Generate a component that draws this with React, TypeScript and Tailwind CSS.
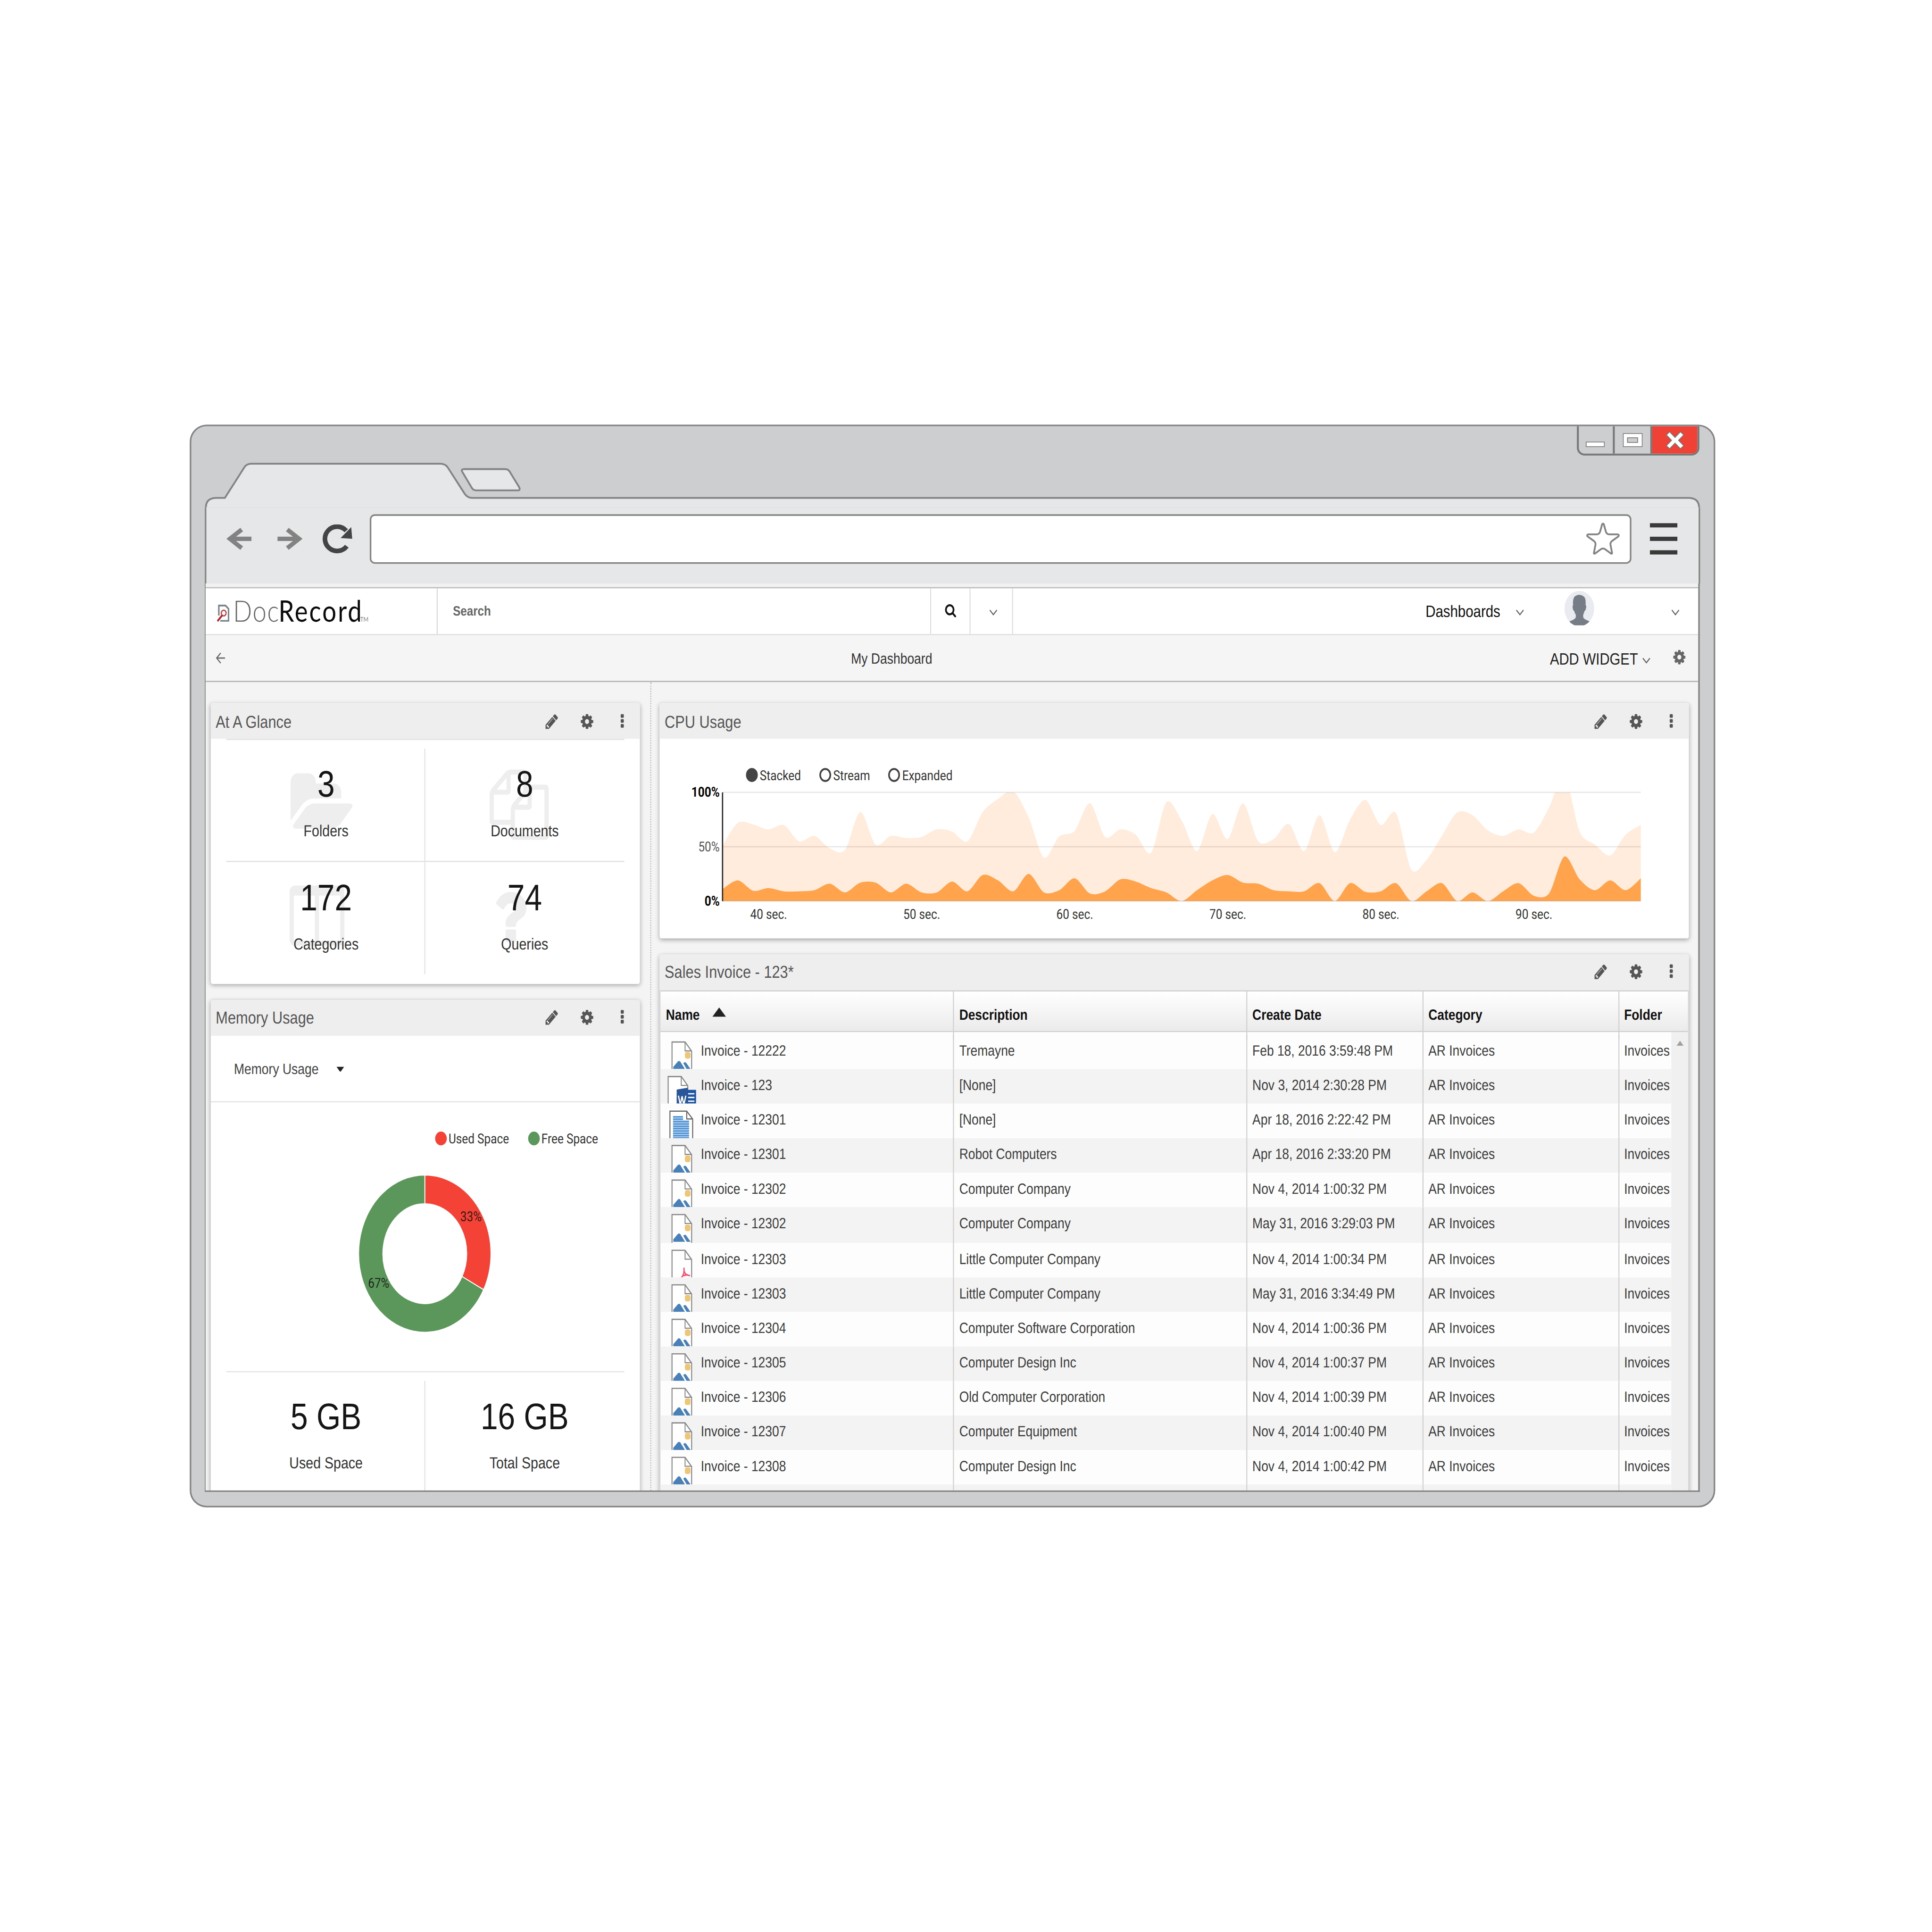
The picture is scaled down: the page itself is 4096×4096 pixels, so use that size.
import React from "react";

/* ---------- icon glyphs (1792-unit grid) ---------- */
const GLYPHS = {
  cog: "M1152 896q0-106-75-181t-181-75-181 75-75 181 75 181 181 75 181-75 75-181zm512-109v222q0 12-8 23t-20 13l-185 28q-19 54-39 91 35 50 107 138 10 12 10 25t-9 23q-27 37-99 108t-94 71q-12 0-26-9l-138-108q-44 23-91 38-16 136-29 186-7 28-36 28h-222q-14 0-24.5-8.5t-11.5-21.5l-28-184q-49-16-90-37l-141 107q-10 9-25 9-14 0-25-11-126-114-165-168-7-10-7-23 0-12 8-23 15-21 51-66.5t54-70.5q-27-50-41-99l-183-27q-13-2-21-12.5t-8-23.5v-222q0-12 8-23t19-13l186-28q14-46 39-92-40-57-107-138-10-12-10-24 0-10 9-23 26-36 98.5-107.5t94.5-71.5q13 0 26 10l138 107q44-23 91-38 16-136 29-186 7-28 36-28h222q14 0 24.5 8.5t11.5 21.5l28 184q49 16 90 37l142-107q9-9 24-9 13 0 25 10 129 119 165 170 7 8 7 22 0 12-8 23-15 21-51 66.5t-54 70.5q26 50 41 98l183 28q13 2 21 12.5t8 23.5z",
  pencil:
    "M491 1536l91-91-235-235-91 91v107h128v128h107zm523-928q0-22-22-22-10 0-17 7l-542 542q-7 7-7 17 0 22 22 22 10 0 17-7l542-542q7-7 7-17zm-54-192l416 416-832 832h-416v-416zm683 96q0 53-37 90l-166 166-416-416 166-165q36-38 90-38 53 0 91 38l235 234q37 39 37 91z",
  dots: "M1088 1248v192q0 40-28 68t-68 28h-192q-40 0-68-28t-28-68v-192q0-40 28-68t68-28h192q40 0 68 28t28 68zm0-512v192q0 40-28 68t-68 28h-192q-40 0-68-28t-28-68v-192q0-40 28-68t68-28h192q40 0 68 28t28 68zm0-512v192q0 40-28 68t-68 28h-192q-40 0-68-28t-28-68v-192q0-40 28-68t68-28h192q40 0 68 28t28 68z",
  search:
    "M1216 832q0-185-131.5-316.5t-316.5-131.5-316.5 131.5-131.5 316.5 131.5 316.5 316.5 131.5 316.5-131.5 131.5-316.5zm512 832q0 52-38 90t-90 38q-54 0-90-38l-343-342q-179 124-399 124-143 0-273.5-55.5t-225-150-150-225-55.5-273.5 55.5-273.5 150-225 225-150 273.5-55.5 273.5 55.5 225 150 150 225 55.5 273.5q0 220-124 399l343 343q37 37 37 90z",
  folder:
    "M1879 952q0 31-31 66l-336 396q-43 51-120.5 86.5t-143.5 35.5h-1088q-34 0-60.5-13t-26.5-43q0-31 31-66l336-396q43-51 120.5-86.5t143.5-35.5h1088q34 0 60.5 13t26.5 43zm-343-344v160h-832q-94 0-197 47.5t-164 119.5l-337 396-5 6q0-4-.5-12.5t-.5-12.5v-960q0-92 66-158t158-66h320q92 0 158 66t66 158v32h544q92 0 158 66t66 158z",
  files:
    "M1696 384q40 0 68 28t28 68v1216q0 40-28 68t-68 28h-960q-40 0-68-28t-28-68v-288h-544q-40 0-68-28t-28-68v-672q0-40 20-88t48-76l408-408q28-28 76-48t88-20h416q40 0 68 28t28 68v328q68-40 128-40h416zm-544 213l-299 299h299v-299zm-640-384l-299 299h299v-299zm196 647l316-316v-416h-384v416q0 40-28 68t-68 28h-416v640h512v-256q0-40 20-88t48-76zm956 804v-1152h-384v416q0 40-28 68t-68 28h-416v640h896z",
  columns:
    "M224 1536h608v-1152h-640v1120q0 13 9.5 22.5t22.5 9.5zm1376-32v-1120h-640v1152h608q13 0 22.5-9.5t9.5-22.5zm128-1216v1216q0 66-47 113t-113 47h-1344q-66 0-113-47t-47-113v-1216q0-66 47-113t113-47h1344q66 0 113 47t47 113z",
  question:
    "M1088 1256v240q0 16-12 28t-28 12h-240q-16 0-28-12t-12-28v-240q0-16 12-28t28-12h240q16 0 28 12t12 28zm316-600q0 54-15.5 101t-35 76.5-55 59.5-57.5 43.5-61 35.5q-41 23-68.5 65t-27.5 67q0 17-12 32.5t-28 15.5h-240q-15 0-25.5-18.5t-10.5-37.5v-45q0-83 65-156.5t143-108.5q59-27 84-56t25-76q0-42-46.5-74t-107.5-32q-65 0-108 29-35 25-107 115-13 16-31 16-12 0-25-8l-164-125q-13-10-15.5-25t5.5-28q160-266 464-266 80 0 161 31t146 83 106 127.5 41 158.5z",
};

function Glyph({ name, className }: { name: keyof typeof GLYPHS; className: string }) {
  return (
    <svg viewBox="0 0 1792 1792" fill="currentColor" overflow="visible" className={className}>
      <path d={GLYPHS[name]} />
    </svg>
  );
}

function Chevron() {
  return (
    <svg viewBox="0 0 8 5" className="block h-[5px] w-[8px] shrink-0" fill="none" stroke="#666" strokeWidth="1">
      <path d="M0.6 0.6 L4 4.3 L7.4 0.6" />
    </svg>
  );
}

/* ---------- browser frame ---------- */
function WindowButtons() {
  return (
    <div className="relative ml-auto mr-[37px] -mt-[4.6px] flex h-[81px] w-[317px] overflow-hidden rounded-b-[20px] border-[5px] border-[#777877] bg-[#cdced0]">
      <div className="flex w-[93px] justify-center border-r-[5px] border-[#777877] pr-[3px] pt-[40px]">
        <div className="h-[14px] w-[49px] border-[2.5px] border-[#777877] bg-white" />
      </div>
      <div className="flex w-[97px] justify-center border-r-[5px] border-[#777877] pt-[18px]">
        <div className="flex h-[36px] w-[51px] items-center justify-center border-[2.5px] border-[#777877] bg-white">
          <div className="h-[14px] w-[28px] border-[2.5px] border-[#777877] bg-[#cdced0]" />
        </div>
      </div>
      <div className="flex flex-1 items-start justify-center bg-[#ef4136] pt-[13px]">
        <svg viewBox="0 0 48 47" className="h-[47px] w-[48px]" fill="white" stroke="#777877" strokeWidth="2.2">
          <path d="M10 1.5 L24 16 L38 1.5 L46.500 9.500 L33 23.500 L46.500 37.500 L38 45.500 L24 31 L10 45.500 L1.500 37.500 L15 23.500 L1.500 9.500 Z" />
        </svg>
      </div>
    </div>
  );
}

function TabStrip() {
  return (
    <div className="relative flex h-[210px] items-start">
      <svg viewBox="495.5 1103.5 3939 210" className="absolute inset-0 h-full w-full" stroke="#828382" strokeWidth="4.6">
        <path
          fill="#e6e7e9"
          d="M532.8 1318 V1313 Q533.500 1290 558 1289 H582 L633 1209 Q639 1200.600 650 1200.600 H1140 Q1151 1200.600 1158 1209 L1203 1279 Q1210 1289 1222 1289 H4372 Q4396 1290 4397.300 1313 V1318"
        />
        <path
          fill="#e6e7e9"
          d="M1200 1214.500 H1307 Q1315 1214.500 1319 1221 L1344 1262 Q1347 1269.500 1340 1269.500 H1232 Q1225 1269.500 1221 1263 L1196 1221 Q1193 1215 1200 1214.500 Z"
        />
      </svg>
      <WindowButtons />
    </div>
  );
}

function Toolbar() {
  return (
    <div className="mx-[35px] flex h-[197px] items-start border-x-[4.6px] border-[#828382] bg-[#e6e7e9] pl-[52px]">
      <svg viewBox="0 0 65 57" className="mt-[53px] h-[57px] w-[65px]" fill="#828282">
        <path d="M0 28.500 L36 0 L43 9 L25 23 H65 V34 H25 L43 48 L36 57 Z" />
      </svg>
      <svg viewBox="0 0 65 57" className="ml-[67px] mt-[53px] h-[57px] w-[65px]" fill="#828282">
        <path d="M65 28.500 L29 0 L22 9 L40 23 H0 V34 H40 L22 48 L29 57 Z" />
      </svg>
      <svg viewBox="0 0 78 75" className="ml-[51px] mt-[44px] h-[75px] w-[78px]" fill="none">
        <path d="M63.500 56.500 A31.500 31.500 0 1 1 62 16.500" stroke="#444" strokeWidth="12" />
        <path d="M75 7 L77.500 37.500 L47.500 35.500 Z" fill="#444" />
      </svg>
      <div className="ml-[45px] mt-[18px] flex h-[128px] w-[3265px] justify-end rounded-[13px] border-[4.600px] border-[#828382] bg-white">
        <svg
          viewBox="0 0 87 84"
          className="mr-[26px] mt-[17px] h-[84px] w-[87px]"
          fill="none"
          stroke="#828382"
          strokeWidth="4.600"
          strokeLinejoin="round"
        >
          <path d="M43.500 3 Q46 4 46.500 8 L51 24 Q53 30.500 60 31 L82 31 Q86.500 33 83 36.500 L67 48 Q62 52 63 58 L67 79 Q67.500 82 64 80.500 L50 70 Q43.500 65 37 70 L23 80.500 Q19.500 82 20 79 L24 58 Q25 52 20 48 L4 36.500 Q0.500 33 5 31 L27 31 Q34 30.500 36 24 L40.500 8 Q41 4 43.500 3 Z" />
        </svg>
      </div>
      <div className="ml-[48px] mt-[41px] flex flex-col gap-[24.500px]">
        <div className="h-[10.500px] w-[71px] bg-[#3a3a3a]" />
        <div className="h-[10.500px] w-[71px] bg-[#3a3a3a]" />
        <div className="h-[10.500px] w-[71px] bg-[#3a3a3a]" />
      </div>
    </div>
  );
}

/* ---------- application header ---------- */
function Logo() {
  return (
    <div className="flex h-full w-[223.300px] items-start pl-[11.400px]">
      <svg viewBox="0 0 12 14.500" className="mt-[12.600px] h-[14.500px] w-[12px]" fill="none">
        <path d="M1.800 9 V0.900 H8.200 L11.200 3.600 V13.400 H3.200" stroke="#7d868d" strokeWidth="1.500" />
        <circle cx="6.500" cy="7" r="2.300" stroke="#c0504d" strokeWidth="1.200" />
        <path d="M5 8.800 L0.500 13.600" stroke="#b02a2a" strokeWidth="1.700" />
      </svg>
      <div className="ml-[3.200px] mt-[4.700px] flex items-baseline whitespace-nowrap font-[Lato] text-[24px] leading-[28px]">
        <span className="inline-block w-[43.800px] font-light tracking-[0.700px] text-[#666]">Doc</span>
        <span className="inline-block w-[78.900px] font-normal tracking-[1.350px] text-[#0a0a0a]">Record</span>
        <span className="text-[5.200px] leading-none text-[#888]">TM</span>
      </div>
    </div>
  );
}

function AppHeader() {
  return (
    <div className="flex h-[37.600px] items-stretch border-b border-[#dedede] bg-white">
      <Logo />
      <div className="flex w-[476px] items-center border-l border-[#d8d8d8] pl-[14.300px] pt-[1.200px] text-[11px] font-bold text-[#666]">Search</div>
      <div className="flex w-[37.800px] items-center justify-center border-l border-[#dedede] pb-[1px] text-[#111]">
        <Glyph name="search" className="block h-[11.500px] w-[11.500px]" />
      </div>
      <div className="flex w-[42px] items-center justify-center border-x border-[#dedede] pl-[3.400px] pt-[1.500px]">
        <Chevron />
      </div>
      <div className="flex flex-1 items-center">
        <span className="ml-[397.800px] w-[72px] pt-[0.800px] text-[13.400px] leading-[36px] text-[#111]">Dashboards</span>
        <div className="ml-[15px] pt-[1.500px]">
          <Chevron />
        </div>
        <svg viewBox="0 0 100 100" className="-mt-[4.500px] ml-[39.300px] block h-[28.700px] w-[28.700px]">
          <defs>
            <clipPath id="avatar">
              <circle cx="50" cy="50" r="50" />
            </clipPath>
          </defs>
          <g clipPath="url(#avatar)">
            <rect width="100" height="100" fill="#e9ebf0" />
            <path
              fill="#767d87"
              d="M50 11 Q63 12 69 20 Q72 28 71 40 Q75 43 72 50 Q71 56 67 57 Q66 63 63 67 V75 Q66 80 76 83 Q83 85 85 88 V100 H15 V88 Q18 85 26 83 Q36 79 38 75 V67 Q34 63 33 57 Q29 56 28 50 Q26 43 29 40 Q27 26 33 17 Q40 11 50 11 Z"
            />
          </g>
        </svg>
        <div className="ml-auto mr-[17.800px] pt-[1.500px]">
          <Chevron />
        </div>
      </div>
    </div>
  );
}

function SubHeader() {
  return (
    <div className="flex h-[38.400px] items-center border-b border-[#b4b4b4] bg-[#f5f5f5] pt-[1.300px]">
      <svg viewBox="0 0 9 9" className="-mt-[1px] ml-[10.200px] block h-[9px] w-[9px]" fill="none" stroke="#666" strokeWidth="1">
        <path d="M4.600 0.400 L0.700 4.500 L4.600 8.600 M0.700 4.500 H8.800" />
      </svg>
      <span className="ml-[603.500px] text-[12.050px] text-[#333]">My Dashboard</span>
      <span className="ml-auto pt-[1.500px] text-[13.300px] text-[#222]">ADD WIDGET</span>
      <div className="ml-[4px] pt-[2.800px]">
        <Chevron />
      </div>
      <Glyph name="cog" className="-mt-[3px] ml-[21.500px] mr-[11px] block h-[13.600px] w-[13.600px] text-[#666]" />
    </div>
  );
}

/* ---------- widgets ---------- */
function WidgetHeader({ title, inset }: { title: string; inset: string }) {
  return (
    <div className={`flex h-[29px] items-center rounded-t-[2px] bg-[#eee] pl-[4.400px] text-[#555] ${inset}`}>
      <span className="flex-1 pt-[0.600px] text-[14px] leading-[28.400px]">{title}</span>
      {(["pencil", "cog", "dots"] as const).map((n) => (
        <span key={n} className="flex w-[33.800px] justify-center">
          <Glyph name={n} className="block h-[14px] w-[14px]" />
        </span>
      ))}
    </div>
  );
}

function Widget({
  title,
  className,
  inset = "",
  children,
}: {
  title: string;
  className: string;
  inset?: string;
  children: React.ReactNode;
}) {
  return (
    <section className={`rounded-[2px] bg-white shadow-[0_1px_4px_rgba(0,0,0,0.32)] ${className}`}>
      <WidgetHeader title={title} inset={inset} />
      {children}
    </section>
  );
}

function Stat({ value, label, icon }: { value: string; label: string; icon?: React.ReactNode }) {
  return (
    <div className="relative flex h-[90.800px] w-1/2 flex-col items-center pt-[11.900px]">
      {icon}
      <span className="relative text-[30px] leading-[36px] text-[#151515]">{value}</span>
      <span className="relative mt-[9px] text-[13px] leading-[20px] text-[#333]">{label}</span>
    </div>
  );
}

function AtAGlance() {
  return (
    <Widget title="At A Glance" className="h-[227.400px]">
      <div className="mx-[15px] border-t border-[#e2e2e2] pt-[7px]">
        <div className="flex border-b border-[#e2e2e2]">
          <Stat value="3" label="Folders" icon={<Glyph name="folder" className="absolute left-[61.200px] top-[16px] h-[57px] w-[57px] text-[#eee]" />} />
          <div className="-ml-px w-px bg-[#e2e2e2]" />
          <Stat value="8" label="Documents" icon={<Glyph name="files" className="absolute left-[62.200px] top-[16.800px] h-[57px] w-[57px] text-[#eee]" />} />
        </div>
        <div className="flex">
          <Stat value="172" label="Categories" icon={<Glyph name="columns" className="absolute left-[59px] top-[15px] h-[57px] w-[57px] text-[#eee]" />} />
          <div className="-ml-px w-px bg-[#e2e2e2]" />
          <Stat value="74" label="Queries" icon={<Glyph name="question" className="absolute left-[53.300px] top-[16.500px] h-[57px] w-[57px] text-[#eee]" />} />
        </div>
      </div>
    </Widget>
  );
}

const DONUT = { cx: 211.8, cy: 543.9, outer: 63.8, inner: 40.5, split: 117.3 };

function arc(from: number, to: number) {
  const at = (deg: number, r: number) => {
    const a = ((deg - 90) * Math.PI) / 180;
    return `${(DONUT.cx + r * Math.cos(a)).toFixed(2)} ${(DONUT.cy + r * Math.sin(a)).toFixed(2)}`;
  };
  const large = to - from > 180 ? 1 : 0;
  return `M${at(from, DONUT.outer)} A${DONUT.outer} ${DONUT.outer} 0 ${large} 1 ${at(to, DONUT.outer)} L${at(to, DONUT.inner)} A${DONUT.inner} ${DONUT.inner} 0 ${large} 0 ${at(from, DONUT.inner)} Z`;
}

function MemoryUsage() {
  return (
    <Widget title="Memory Usage" className="mt-[13.200px] h-[440px]">
      <div className="flex h-[54.400px] items-center gap-[17.300px] border-b border-[#e4e4e4] pl-[22px]">
        <span className="pt-[1px] text-[12.050px] leading-[52px] text-[#444]">Memory Usage</span>
        <svg viewBox="0 0 8 4.500" className="mt-[1.200px] block h-[4.500px] w-[8px]" fill="#222">
          <path d="M0.300 0 H7.700 L4 4.500 Z" />
        </svg>
      </div>
      <svg viewBox="5.3 421.2 413.3 217.8" className="block h-[217.800px] w-full font-[Roboto]" fontSize="11.100" fill="#333">
        <circle cx="227.400" cy="450.500" r="5.600" fill="#f44336" />
        <text x="234.700" y="454.400">Used Space</text>
        <circle cx="317.100" cy="450.500" r="5.600" fill="#5b975b" />
        <text x="324.300" y="454.400">Free Space</text>
        <g stroke="#fff" strokeWidth="0.800">
          <path d={arc(0, DONUT.split)} fill="#f44336" />
          <path d={arc(DONUT.split, 360)} fill="#5b975b" />
        </g>
        <text x="246" y="517.400" fill="#111" fillOpacity="0.850">33%</text>
        <text x="157" y="571.400" fill="#111" fillOpacity="0.850">67%</text>
      </svg>
      <div className="mx-[15px] border-t border-[#e6e6e6] pt-[7.400px]">
        <div className="flex">
          <Stat value="5 GB" label="Used Space" />
          <div className="-ml-px w-px bg-[#e2e2e2]" />
          <Stat value="16 GB" label="Total Space" />
        </div>
      </div>
    </Widget>
  );
}

/* ---------- CPU chart ---------- */
const TOTAL = [
  51, 72, 70.5, 66, 70, 55, 60, 48.5, 47, 82, 52, 60, 58, 59, 66, 64, 55, 82, 94, 101, 77, 40, 59.5, 64.5, 90, 59, 66, 61, 44.5, 91, 74,
  46, 80, 57, 90, 55, 57, 71, 46, 79, 45, 75, 93, 70, 81, 29, 38, 60, 81.5, 79, 65, 60, 66, 63, 86, 116, 64, 52, 42, 61, 70,
];
const BUSY = [
  11, 19, 9.5, 12, 9, 9, 10, 16, 8, 17, 17, 8, 16, 8, 8, 18, 9, 24, 19, 9, 25, 8, 10, 21, 7, 9, 20, 18, 12, 8, 0, 10, 19, 24, 17, 16, 10,
  9, 9, 16.5, 0, 16.5, 8.5, 9, 16.5, 0, 9, 16.5, 0, 8, 0, 9, 16.5, 5, 7, 41, 20, 10, 19, 10, 21,
];
const PLOT = { left: 499, right: 1385, top: 169.5, bottom: 257.7 };

function area(values: number[]) {
  const step = (PLOT.right - PLOT.left) / (values.length - 1);
  const pts = values.map((v, i) => [PLOT.left + i * step, PLOT.bottom - (v / 100) * (PLOT.bottom - PLOT.top)]);
  const tangent = (i: number) => {
    const a = pts[Math.max(i - 1, 0)];
    const b = pts[Math.min(i + 1, pts.length - 1)];
    return [(b[0] - a[0]) * 0.15, (b[1] - a[1]) * 0.15];
  };
  let d = `M${PLOT.left} ${PLOT.bottom} L${pts[0][0]} ${pts[0][1]}`;
  for (let i = 1; i < pts.length; i++) {
    const t0 = tangent(i - 1);
    const t1 = tangent(i);
    d += ` C${pts[i - 1][0] + t0[0]} ${pts[i - 1][1] + t0[1]} ${pts[i][0] - t1[0]} ${pts[i][1] - t1[1]} ${pts[i][0]} ${pts[i][1]}`;
  }
  return `${d} L${PLOT.right} ${PLOT.bottom} Z`;
}

function CpuUsage() {
  const middle = (PLOT.top + PLOT.bottom) / 2;
  return (
    <Widget title="CPU Usage" inset="pr-[0.900px]" className="h-[190.700px]">
      <svg viewBox="438.3 126 992.8 161.7" className="block h-[161.700px] w-full font-[Roboto]" fontSize="11.100" fill="#333">
        <defs>
          <clipPath id="plot">
            <rect x={PLOT.left} y={PLOT.top} width={PLOT.right - PLOT.left} height={PLOT.bottom - PLOT.top} />
          </clipPath>
        </defs>
        <g stroke="#444" strokeWidth="1.600">
          <circle cx="527.300" cy="155.400" r="4.900" fill="#444" />
          <circle cx="598.100" cy="155.400" r="4.900" fill="#fff" />
          <circle cx="664.500" cy="155.400" r="4.900" fill="#fff" />
        </g>
        <text x="534.900" y="159.500">Stacked</text>
        <text x="605.800" y="159.500">Stream</text>
        <text x="672.300" y="159.500">Expanded</text>
        <g clipPath="url(#plot)">
          <path d={area(TOTAL)} fill="#ffecdc" />
          <path d={area(BUSY)} fill="#ffa44d" />
        </g>
        <g stroke="#000" strokeOpacity="0.090" strokeWidth="1">
          <path d={`M${PLOT.left} ${PLOT.top} H${PLOT.right}`} />
          <path d={`M${PLOT.left} ${middle} H${PLOT.right}`} />
          <path d={`M${PLOT.left} ${PLOT.bottom} H${PLOT.right}`} />
        </g>
        <path d={`M${PLOT.left} ${PLOT.top} V${PLOT.bottom}`} stroke="#222" strokeWidth="1.200" />
        <g textAnchor="end">
          <text x="496.200" y="173" fontWeight="700" fill="#000">100%</text>
          <text x="496.200" y="217.200" fill="#555">50%</text>
          <text x="496.200" y="261.400" fontWeight="700" fill="#000">0%</text>
        </g>
        <g textAnchor="middle">
          {[40, 50, 60, 70, 80, 90].map((s) => (
            <text key={s} x={PLOT.left + 0.2 + ((s - 37) * (PLOT.right - PLOT.left)) / 60} y="272">
              {s} sec.
            </text>
          ))}
        </g>
      </svg>
    </Widget>
  );
}

/* ---------- invoice table ---------- */
type Kind = "image" | "word" | "text" | "pdf";

function FileIcon({ kind }: { kind: Kind }) {
  if (kind === "text") {
    return (
      <svg viewBox="0 0 36 28.100" className="block h-full w-[36px] shrink-0" fill="none">
        <path d="M9 30 V6.100 H25.200 L30.900 12.500 V30" fill="#fff" stroke="#666" strokeWidth="1" />
        <path d="M25.200 6.100 V12.400 H30.900" stroke="#666" strokeWidth="1" />
        <rect x="12" y="10" width="9.600" height="3.500" fill="#a9cbee" />
        <rect x="12" y="13.500" width="15.400" height="15" fill="#a9cbee" />
        <g stroke="#4a8fd0" strokeWidth="0.950">
          <path d="M12 10.700 H21.600 M12 12.600 H21.600" />
          <path d="M12 14.600 H27.400 M12 16.500 H27.400 M12 18.400 H27.400 M12 20.300 H27.400 M12 22.200 H27.400 M12 24.100 H27.400 M12 26 H27.400 M12 27.800 H27.400" />
        </g>
      </svg>
    );
  }
  const x = kind === "word" ? 7.3 : 11;
  return (
    <svg viewBox="0 0 36 28.100" className="block h-full w-[36px] shrink-0" fill="none">
      <path d={`M${x} 30 V6 H${x + 12.6} L${x + 18.9} 13.400 V30`} fill="#fff" stroke="#888" strokeWidth="1" />
      <path d={`M${x + 12.6} 6 V13.200 H${x + 18.9}`} stroke="#888" strokeWidth="0.900" />
      {kind === "image" && (
        <>
          <rect x="23.400" y="14.100" width="5.400" height="5.400" rx="1.800" fill="#efc675" />
          <path d="M12.200 28.100 V26.200 L16.500 21.900 Q17.800 20.700 19 21.900 L23.600 28.100 Z" fill="#4a80b8" />
          <path d="M21.900 23.200 Q23.500 21.500 25 23.300 L29 28.100 H25.200 Z" fill="#4a80b8" />
        </>
      )}
      {kind === "pdf" && (
        <path d="M22.600 20 V22.700 Q22.500 25.700 20 28.300 M22.600 22.700 Q23.500 26.200 28.300 26.500 M21 26.700 L25.500 25.900" stroke="#f4506a" strokeWidth="1.200" />
      )}
      {kind === "word" && (
        <>
          <rect x="25.500" y="16.800" width="8.700" height="12.500" fill="#1f55a5" />
          <path d="M26.500 20 H32.600 M26.500 23 H32.600 M26.500 26 H32.600" stroke="#fff" strokeWidth="1.100" />
          <path d="M15.500 16.600 L26.300 15.100 V29 H15.500 Z" fill="#2a5699" />
          <path d="M17.200 21.500 L19 29 L20.700 22 L22.400 29 L24.300 21.500" stroke="#fff" strokeWidth="1.200" />
        </>
      )}
    </svg>
  );
}

const ROWS: [Kind, string, string, string][] = [
  ["image", "Invoice - 12222", "Tremayne", "Feb 18, 2016 3:59:48 PM"],
  ["word", "Invoice - 123", "[None]", "Nov 3, 2014 2:30:28 PM"],
  ["text", "Invoice - 12301", "[None]", "Apr 18, 2016 2:22:42 PM"],
  ["image", "Invoice - 12301", "Robot Computers", "Apr 18, 2016 2:33:20 PM"],
  ["image", "Invoice - 12302", "Computer Company", "Nov 4, 2014 1:00:32 PM"],
  ["image", "Invoice - 12302", "Computer Company", "May 31, 2016 3:29:03 PM"],
  ["pdf", "Invoice - 12303", "Little Computer Company", "Nov 4, 2014 1:00:34 PM"],
  ["image", "Invoice - 12303", "Little Computer Company", "May 31, 2016 3:34:49 PM"],
  ["image", "Invoice - 12304", "Computer Software Corporation", "Nov 4, 2014 1:00:36 PM"],
  ["image", "Invoice - 12305", "Computer Design Inc", "Nov 4, 2014 1:00:37 PM"],
  ["image", "Invoice - 12306", "Old Computer Corporation", "Nov 4, 2014 1:00:39 PM"],
  ["image", "Invoice - 12307", "Computer Equipment", "Nov 4, 2014 1:00:40 PM"],
  ["image", "Invoice - 12308", "Computer Design Inc", "Nov 4, 2014 1:00:42 PM"],
];

const CELL = "overflow-hidden whitespace-nowrap border-r border-[#d0d0d0] pl-[4.600px]";

function SalesInvoice() {
  return (
    <Widget title="Sales Invoice - 123*" inset="pr-[0.900px]" className="mt-[13px] h-[480px]">
      <div className="border-x border-[#d4d4d4]">
        <div className="grid h-[34.600px] grid-cols-[283px_282.800px_169.800px_188.800px_1fr] border-y border-[#cfcfcf] bg-gradient-to-b from-white to-[#ebebeb] text-[12px] font-bold leading-[39px] text-[#111]">
          <div className={`${CELL} flex`}>
            Name
            <svg viewBox="0 0 13 7.500" className="ml-[12.700px] mt-[13.200px] block h-[7.500px] w-[13px]" fill="#222">
              <path d="M6.500 0 L13 7.500 H0 Z" />
            </svg>
          </div>
          <div className={CELL}>Description</div>
          <div className={CELL}>Create Date</div>
          <div className={CELL}>Category</div>
          <div className="pl-[4.600px]">Folder</div>
        </div>
        <div className="flex bg-[#fdfdfd] text-[12.030px] leading-[27px] text-[#3c3c3c]">
          <div className="flex-1 pt-[1.300px]">
            {ROWS.map(([kind, name, description, date], i) => (
              <div
                key={i}
                className="grid h-[28.140px] grid-cols-[283px_282.800px_169.800px_188.800px_1fr] overflow-hidden even:bg-[#f3f3f3]"
              >
                <div className="flex overflow-hidden whitespace-nowrap border-r border-[#d0d0d0]">
                  <FileIcon kind={kind} />
                  <span className="ml-[2.300px]">{name}</span>
                </div>
                <div className={CELL}>{description}</div>
                <div className={CELL}>{date}</div>
                <div className={CELL}>AR Invoices</div>
                <div className="overflow-hidden whitespace-nowrap pl-[4.600px]">Invoices</div>
              </div>
            ))}
            <div className="grid h-[28.140px] grid-cols-[283px_282.800px_169.800px_188.800px_1fr] bg-[#f3f3f3]">
              <div className={CELL} />
              <div className={CELL} />
              <div className={CELL} />
              <div className={CELL} />
            </div>
          </div>
          <div className="flex w-[16.400px] justify-center bg-[#f0f0f0] pt-[6.800px]">
            <svg viewBox="0 0 7 4.200" className="block h-[4.200px] w-[7px]" fill="#a0a0a0">
              <path d="M3.500 0 L7 4.200 H0 Z" />
            </svg>
          </div>
        </div>
      </div>
    </Widget>
  );
}

export default function App() {
  return (
    <div className="h-[4096px] w-[4096px] overflow-hidden bg-white">
      <div className="h-[5000px] w-[5000px] origin-top-left scale-[0.8192] pl-[491px] pt-[1099px]">
        <div className="h-[2802px] w-[3948px] overflow-hidden rounded-[44px] border-[4.600px] border-[#828382] bg-[#cdced0]">
          <TabStrip />
          <Toolbar />
          <main className="ml-[35px] h-[2350.500px] w-[3869px] overflow-hidden border-b-[4.500px] border-l-[2px] border-r-[4px] border-[#828382]">
            <div className="flex h-[735.500px] w-[1440px] origin-top-left flex-col overflow-hidden bg-[#f4f4f4] font-['Liberation_Sans',Arial,sans-serif] [text-rendering:geometricPrecision] [transform:scale(2.6826,3.19)]">
              <div className="h-[4px] shrink-0 border-b border-[#b9b9b9] bg-[#f1f1f1]" />
              <AppHeader />
              <SubHeader />
              <div className="flex min-h-0 flex-1 overflow-hidden">
                <div className="w-[429.600px] shrink-0 border-r border-dotted border-[#bdbdbd] pl-[5.400px] pr-[9.900px] pt-[17.200px]">
                  <AtAGlance />
                  <MemoryUsage />
                </div>
                <div className="flex-1 pl-[8.900px] pr-[8.700px] pt-[17.200px]">
                  <CpuUsage />
                  <SalesInvoice />
                </div>
              </div>
            </div>
          </main>
        </div>
      </div>
    </div>
  );
}
